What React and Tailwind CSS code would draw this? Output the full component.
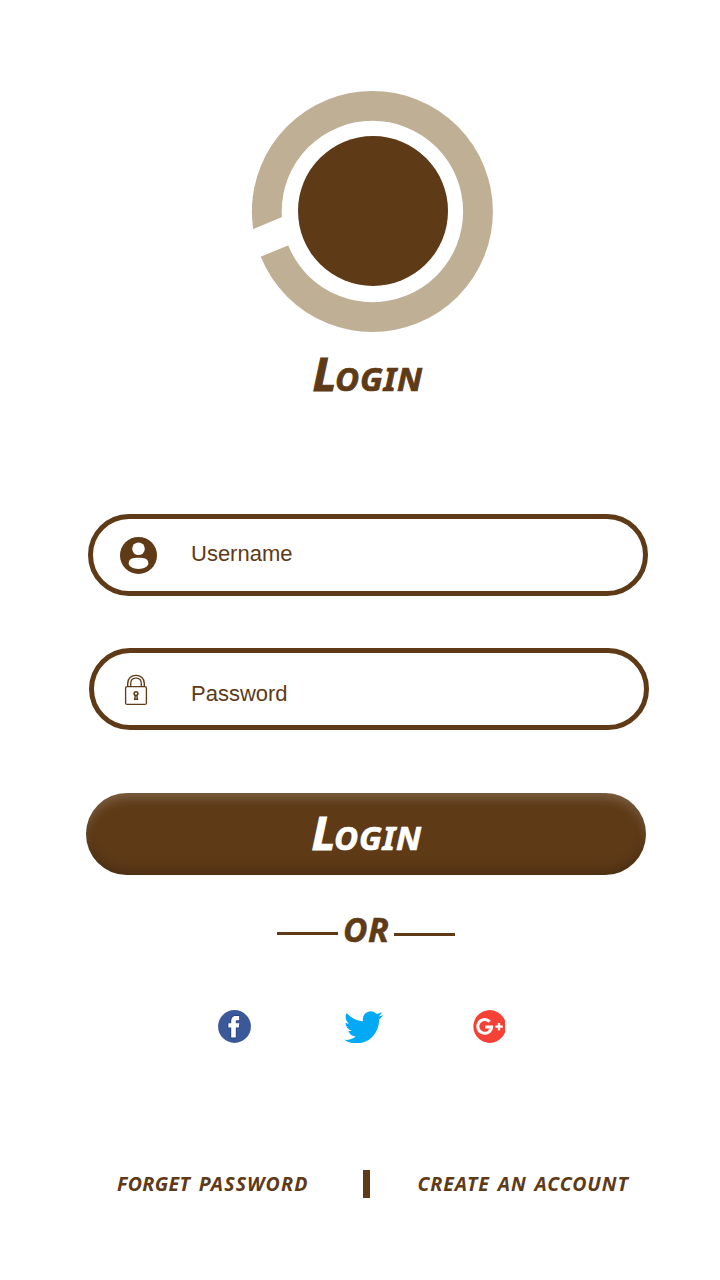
import React from "react";

function Logo() {
  return (
    <svg width="242" height="242" viewBox="0 0 242 242" className="block">
      <circle cx="121.4" cy="120.5" r="105.6" fill="none" stroke="#bfb095" strokeWidth="29.8" />
      <polygon points="-6,141.5 40,122.200 40,153.200 -6,172.200" fill="#fff" />
      <circle cx="122" cy="120" r="75" fill="#5e3a17" />
    </svg>
  );
}

function UserIcon() {
  return (
    <svg width="38" height="38" viewBox="0 0 38 38" className="block">
      <circle cx="19.5" cy="19.4" r="18.5" fill="#5e3a17" />
      <circle cx="19.5" cy="12.700" r="6.3" fill="#fff" />
      <path d="M9.7 27.300C9.700 22.800 13.600 21.700 19.500 21.700s9.800 1.100 9.800 5.600c0 3.300-4.400 5.600-9.800 5.600s-9.800-2.300-9.800-5.600z" fill="#fff" />
    </svg>
  );
}

function LockIcon() {
  return (
    <svg width="24" height="32" viewBox="0 0 24 32" className="block" fill="none" stroke="#5e3a17">
      <rect x="1.6" y="12.600" width="20.8" height="17.8" rx="1.5" strokeWidth="1.3" />
      <path d="M3.7 13V9.5C3.7 4.5 7.3 1.4 12 1.4s8.3 3.1 8.3 8.1V13" strokeWidth="1.4" />
      <path d="M6.7 13V9.8C6.7 6.3 8.9 4.2 12 4.2s5.3 2.1 5.3 5.6V13" strokeWidth="1.3" />
      <circle cx="12" cy="19.6" r="1.9" strokeWidth="1.5" />
      <path d="M11.300 21.400l-.6 3.900h2.800L12.800 21.400" strokeWidth="1.4" />
    </svg>
  );
}

function FacebookIcon() {
  return (
    <svg width="34" height="34" viewBox="0 0 34 34" className="block">
      <circle cx="17.500" cy="16.5" r="16.4" fill="#3b5998" />
      <path d="M13.700 28.600V18.300h-3.100v-5.300h3.100v-2.200c0-3.700 2.100-5.500 5.500-5.500h4v5.500h-2.300c-1 0-1.300.5-1.300 1.300v1.400h3.400l-.5 4.800h-2.900v10.300z" fill="#213d78" transform="translate(-.3 0)" />
      <path d="M14.200 27.600V17.600h-2.900v-4.300h2.900v-2.500c0-3.100 1.700-4.700 4.900-4.700h3.100v4.200h-1.900c-1.100 0-1.500.5-1.500 1.400v1.600h3.500l-.5 4.300h-3v10z" fill="#fff" />
    </svg>
  );
}

function TwitterIcon() {
  return (
    <svg width="39" height="32" viewBox="0 0 24 19.500" preserveAspectRatio="none" className="block">
      <path fill="#03a9f4" d="M23.954 2.569a10 10 0 0 1-2.825.775 4.958 4.958 0 0 0 2.163-2.723c-.951.555-2.005.959-3.127 1.184a4.920 4.920 0 0 0-8.384 4.482C7.691 6.094 4.066 4.130 1.640 1.161a4.822 4.822 0 0 0-.666 2.475c0 1.710.870 3.213 2.188 4.096a4.904 4.904 0 0 1-2.228-.616v.060a4.923 4.923 0 0 0 3.946 4.827 4.996 4.996 0 0 1-2.212.085 4.937 4.937 0 0 0 4.604 3.417 9.868 9.868 0 0 1-6.102 2.105c-.390 0-.779-.023-1.170-.067a13.995 13.995 0 0 0 7.557 2.209c9.054 0 13.999-7.496 13.999-13.986 0-.209 0-.420-.015-.630a9.936 9.936 0 0 0 2.460-2.548z" />
    </svg>
  );
}

function GoogleIcon() {
  return (
    <svg width="34" height="34" viewBox="0 0 34 34" className="block">
      <path d="M32 10.600v11.800A16.400 16.400 0 1 1 32 10.600z" fill="#f44336" />
      <path d="M16.700 11.600A6.900 6.900 0 1 0 18.600 17H12.200" fill="none" stroke="#fff" strokeWidth="3" />
      <path d="M26 13v7.200M22.400 16.600h7.300" stroke="#fff" strokeWidth="2.300" />
    </svg>
  );
}

function Title() {
  return (
    <span className="flex items-baseline text-[46.500px] leading-[48px] [-webkit-text-stroke:1px_currentColor]">
      L
      <span className="-ml-[1.500px] text-[33px] tracking-[0.800px] [-webkit-text-stroke:0.700px_currentColor]">OGIN</span>
    </span>
  );
}

export default function App() {
  return (
    <main className="flex h-[1280px] w-[720px] flex-col overflow-hidden bg-white pt-[91px] font-['Noto_Sans',sans-serif] font-bold italic text-[#5e3a17]">
      <div className="ml-[251px] h-[242px]">
        <Logo />
      </div>
      <h1 className="ml-[312.500px] mt-[16px] h-[48px]">
        <Title />
      </h1>

      <form className="mt-[117px] flex flex-col" onSubmit={(e) => e.preventDefault()}>
        <label className="ml-[88px] flex h-[82px] w-[560px] items-center rounded-[41px] border-5 border-[#5e3a17] pl-[26px]">
          <UserIcon />
          <span className="mb-[3px] ml-[34px] font-['Liberation_Sans',sans-serif] text-[22px] font-normal not-italic">Username</span>
        </label>
        <label className="ml-[89px] mt-[52px] flex h-[82px] w-[560px] items-center rounded-[41px] border-5 border-[#5e3a17] pl-[30px]">
          <div className="mt-[2px]">
            <LockIcon />
          </div>
          <span className="ml-[43px] mt-[9px] font-['Liberation_Sans',sans-serif] text-[22px] font-normal not-italic">Password</span>
        </label>
        <button
          type="submit"
          className="ml-[86px] mt-[63px] flex h-[82px] w-[560px] items-center rounded-[41px] bg-[#5e3a17] pl-[225.500px] pt-[2px] text-white shadow-[inset_0_8px_12px_-3px_rgba(255,255,255,0.2),inset_0_-8px_12px_-3px_rgba(0,0,0,0.22)]"
        >
          <Title />
        </button>
      </form>

      <div className="ml-[277px] mt-[35px] flex h-[44px] items-center">
        <span className="mt-[3px] h-[3px] w-[61px] bg-[#5e3a17]" />
        <span className="-mt-[6px] w-[56px] pl-[5px] text-[33.500px] leading-[44px] tracking-[0.500px] [-webkit-text-stroke:0.500px_currentColor]">OR</span>
        <span className="mt-[5px] h-[3px] w-[61px] bg-[#5e3a17]" />
      </div>

      <nav className="ml-[217px] mt-[56px] flex h-[34px] items-start">
        <FacebookIcon />
        <div className="ml-[93px] mt-[1px]">
          <TwitterIcon />
        </div>
        <div className="ml-[90px]">
          <GoogleIcon />
        </div>
      </nav>

      <footer className="mt-[126px] flex h-[28px] items-center pl-[117px] text-[19.500px] leading-[28px]">
        <a className="w-[246px] whitespace-nowrap tracking-[0.350px] [word-spacing:3px]">
          FORGET <span className="tracking-[1.150px]">PASSWORD</span>
        </a>
        <span className="h-[28px] w-[7px] bg-[#5e3a17]" />
        <a className="ml-[47.500px] whitespace-nowrap tracking-[0.900px] [word-spacing:2px]">CREATE AN ACCOUNT</a>
      </footer>
    </main>
  );
}
